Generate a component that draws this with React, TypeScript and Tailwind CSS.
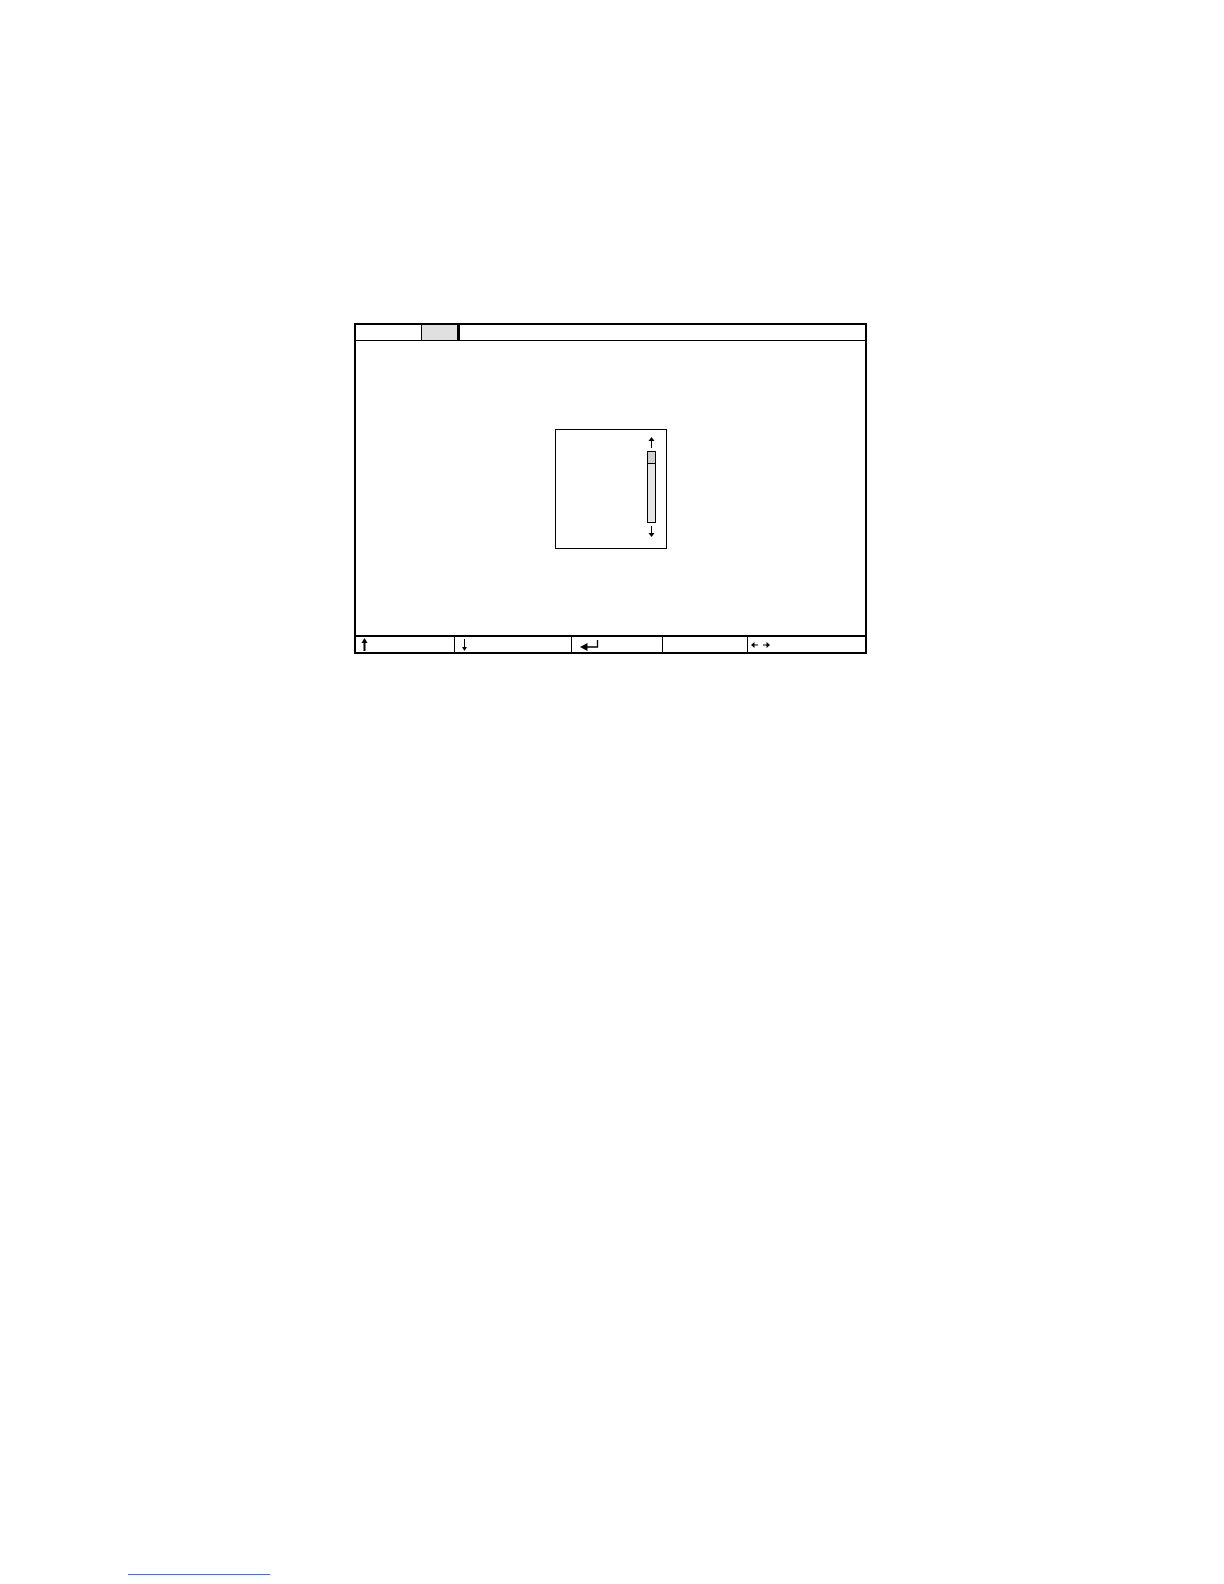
export default function App() {
  return (
    <main className="relative min-h-[1584px] w-[1224px] bg-white pl-[354px] pt-[323px] font-['Liberation_Sans',sans-serif]">
      <div className="flex h-[331px] w-[513px] flex-col border-2 border-black">
        {/* top bar */}
        <div className="flex h-[16px] shrink-0 border-b-[1.5px] border-black">
          <div className="w-[65px]" />
          <div className="w-[39px] border-l border-r-[3px] border-black bg-[#e0e0e0]" />
          <div className="flex-1" />
        </div>

        {/* body */}
        <div className="flex-1">
          <div className="ml-[199px] mt-[88px] flex h-[120px] w-[112px] justify-end border-[1.5px] border-black pr-[10px]">
            <div className="flex w-[9px] flex-col items-center pt-[7px]">
              <svg width="7" height="11" viewBox="0 0 7 11" className="block">
                <path d="M3.5 0 L6.5 4 L0.5 4 Z" fill="#000" />
                <path d="M3.5 3 V11" stroke="#000" strokeWidth="1" />
              </svg>
              <div className="mt-[3px] flex h-[72px] w-[9px] flex-col border border-black bg-[#e6e6e6]">
                <div className="h-[12px] border-b border-black bg-[#cfcfcf]" />
              </div>
              <svg width="7" height="11" viewBox="0 0 7 11" className="mt-[3px] block">
                <path d="M3.5 0 V8" stroke="#000" strokeWidth="1" />
                <path d="M3.5 11 L6.5 7 L0.5 7 Z" fill="#000" />
              </svg>
            </div>
          </div>
        </div>

        {/* bottom bar */}
        <div className="flex h-[17px] shrink-0 border-t-2 border-black">
          <div className="flex w-[98px] items-center pl-[5px]">
            <svg width="7" height="13" viewBox="0 0 7 13">
              <path d="M3.5 0 L6.5 5 L0.5 5 Z" fill="#000" />
              <path d="M3.5 4 V13" stroke="#000" strokeWidth="2" />
            </svg>
          </div>
          <div className="flex w-[117px] items-center border-l border-black pl-[6px]">
            <svg width="7" height="12" viewBox="0 0 7 12">
              <path d="M3.5 0 V9" stroke="#000" strokeWidth="1" />
              <path d="M3.5 12 L6 8 L1 8 Z" fill="#000" />
            </svg>
          </div>
          <div className="flex w-[91px] items-center border-l border-black pl-[8px]">
            <svg width="20" height="12" viewBox="0 0 20 12">
              <path d="M0 8 L7.5 4 L7.5 12 Z" fill="#000" />
              <path d="M6 8 H17.5 V1" stroke="#000" strokeWidth="1.3" fill="none" />
            </svg>
          </div>
          <div className="w-[85px] border-l border-black" />
          <div className="flex flex-1 items-center border-l border-black pl-[3px]">
            <svg width="20" height="8" viewBox="0 0 20 8">
              <path d="M0 4 L3.5 1 L3.5 7 Z" fill="#000" />
              <path d="M3 4 H7" stroke="#000" strokeWidth="1" />
              <path d="M19 4 L15.5 1 L15.5 7 Z" fill="#000" />
              <path d="M12 4 H16" stroke="#000" strokeWidth="1" />
            </svg>
          </div>
        </div>
      </div>

      <div className="ml-[-226px] mt-[920px] h-px w-[142px] bg-[#4a6fd6]" />
    </main>
  );
}
